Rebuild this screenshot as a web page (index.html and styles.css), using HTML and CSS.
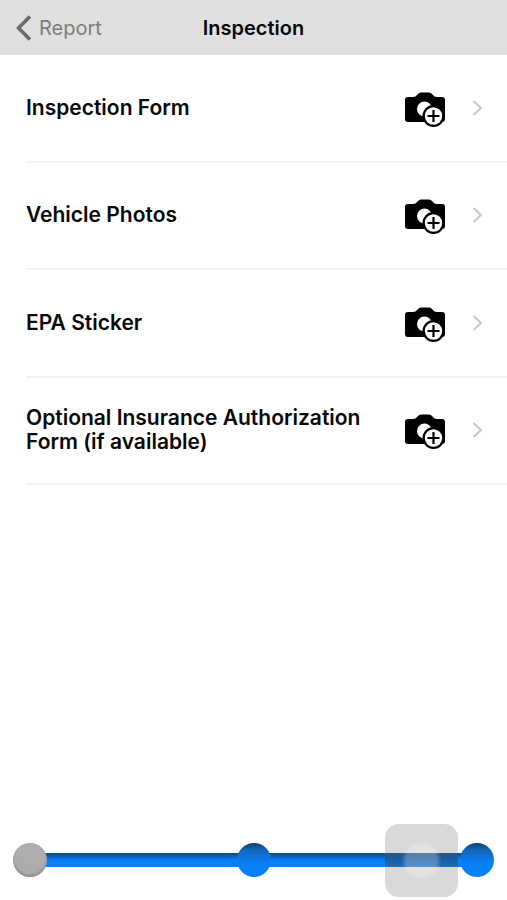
FILE: index.html
```html
<!DOCTYPE html>
<html lang="en">
<head>
<meta charset="utf-8">
<meta name="viewport" content="width=device-width, initial-scale=1">
<title>Inspection</title>
<link rel="stylesheet" href="styles.css">
</head>
<body>
<svg class="defs" aria-hidden="true">
  <symbol id="camera-add" viewBox="0 0 40 40">
    <path d="M3 9H8Q11 9 12 7L13 6Q14 4.500 16 4.500H24Q26 4.500 27 6L28 7Q29 9 32 9H37Q40 9 40 12V31Q40 34 37 34H3Q0 34 0 31V12Q0 9 3 9Z"/>
    <circle cx="19.500" cy="21" r="7.500" fill="#fff"/>
    <circle cx="28.500" cy="28" r="11"/>
    <circle cx="28.500" cy="28" r="8.700" fill="#fff"/>
    <path d="M28.500 22V34M22.500 28H34.500" fill="none" stroke="#000" stroke-width="2.200"/>
  </symbol>
  <symbol id="chevron" viewBox="0 0 12 16">
    <path d="M1.500 1L9 8L1.500 15" fill="none" stroke="#c8c8ca" stroke-width="2"/>
  </symbol>
</svg>
<header class="bar">
  <a class="back" href="#report">
    <svg class="back-icon" viewBox="0 0 16 26" aria-hidden="true"><path d="M14 1.500L2.500 13L14 24.500" fill="none" stroke="#6c6c6c" stroke-width="3.600"/></svg>
    Report
  </a>
  <h1 class="title">Inspection</h1>
</header>
<main class="list">
  <a class="row" href="#form"><span class="label">Inspection Form</span><svg class="camera"><use href="#camera-add"/></svg><svg class="chevron"><use href="#chevron"/></svg></a>
  <a class="row" href="#photos"><span class="label">Vehicle Photos</span><svg class="camera"><use href="#camera-add"/></svg><svg class="chevron"><use href="#chevron"/></svg></a>
  <a class="row" href="#sticker"><span class="label">EPA Sticker</span><svg class="camera"><use href="#camera-add"/></svg><svg class="chevron"><use href="#chevron"/></svg></a>
  <a class="row" href="#insurance"><span class="label">Optional Insurance Authorization Form (if available)</span><svg class="camera"><use href="#camera-add"/></svg><svg class="chevron"><use href="#chevron"/></svg></a>
</main>
<footer class="steps">
  <span class="step step-done"></span>
  <span class="track"></span>
  <span class="step"></span>
  <span class="track"></span>
  <span class="step"></span>
  <button class="assist" type="button" aria-label="Assistive menu"></button>
</footer>
</body>
</html>
```
FILE: styles.css
```css
* {
  box-sizing: border-box;
}

body {
  display: flex;
  flex-direction: column;
  min-height: 100vh;
  margin: 0;
  background: #fff;
  color: #080808;
  font-family: Inter, "Liberation Sans", sans-serif;
  font-size: 20px;
  line-height: 24px;
}

a {
  color: inherit;
  text-decoration: none;
}

.defs {
  position: absolute;
  width: 0;
  height: 0;
}

.bar {
  display: grid;
  grid-template-columns: 1fr auto 1fr;
  align-items: center;
  height: 55px;
  padding: 0 16px;
  background: #e0e0e0;
}

.back {
  display: flex;
  align-items: center;
  gap: 7px;
  color: #7c7c7c;
}

.back-icon {
  width: 16px;
  height: 26px;
}

.title {
  margin: 0;
  font-size: 20px;
  font-weight: 600;
}

.list {
  display: grid;
  grid-auto-rows: 1fr;
  min-height: 430px;
  margin-left: 26px;
}

.row {
  display: flex;
  align-items: center;
  padding-right: 23px;
  border-bottom: 2px solid #f3f3f3;
}

.label {
  flex: 1;
  padding-right: 40px;
  font-size: 21px;
  font-weight: 600;
}

.camera {
  width: 40px;
  height: 40px;
  margin-right: 27px;
}

.chevron {
  width: 12px;
  height: 16px;
}

.steps {
  position: relative;
  display: flex;
  align-items: center;
  margin-top: auto;
  padding: 0 13px 23px;
}

.step {
  z-index: 1;
  width: 34px;
  height: 34px;
  border-radius: 50%;
  background: linear-gradient(#123c68 0, #1266b8 20%, #0c76e0 45%, #0780fb 60%);
}

.step-done {
  background: #adadad;
  box-shadow: inset 0 -2px 3px #8b8b8b;
}

.track {
  flex: 1;
  height: 14px;
  margin: 0 -2px;
  background: linear-gradient(#124779 0, #0d66bd 30%, #0780fb 50%);
}

.assist {
  position: absolute;
  right: 49px;
  bottom: 3px;
  z-index: 2;
  width: 73px;
  height: 73px;
  padding: 0;
  border: 0;
  border-radius: 14px;
  background:
    radial-gradient(circle, rgba(255, 255, 255, .25) 15px, rgba(255, 255, 255, .15) 17px, transparent 20px),
    linear-gradient(transparent 29px, #2c5580 29px, #1c5a9a 34px, #1c6fc4 43px, transparent 43px),
    #d9d9d9;
}
```
